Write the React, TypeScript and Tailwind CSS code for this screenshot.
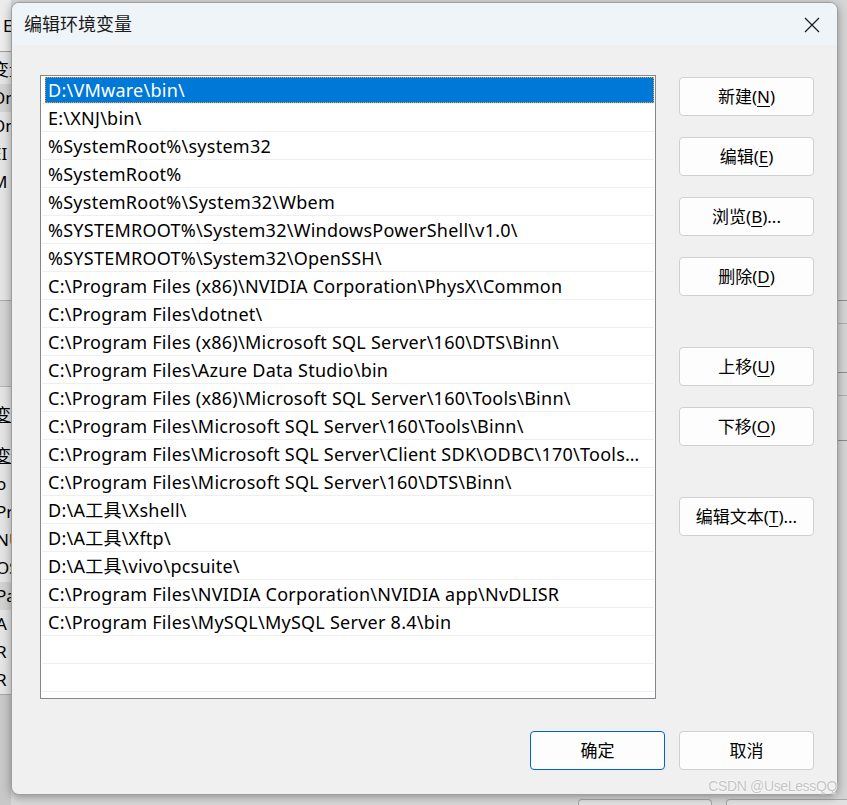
import React from 'react';

const FONT = '"Noto Sans", "Noto Sans CJK SC", sans-serif';

const paths = [
  'D:\\VMware\\bin\\',
  'E:\\XNJ\\bin\\',
  '%SystemRoot%\\system32',
  '%SystemRoot%',
  '%SystemRoot%\\System32\\Wbem',
  '%SYSTEMROOT%\\System32\\WindowsPowerShell\\v1.0\\',
  '%SYSTEMROOT%\\System32\\OpenSSH\\',
  'C:\\Program Files (x86)\\NVIDIA Corporation\\PhysX\\Common',
  'C:\\Program Files\\dotnet\\',
  'C:\\Program Files (x86)\\Microsoft SQL Server\\160\\DTS\\Binn\\',
  'C:\\Program Files\\Azure Data Studio\\bin',
  'C:\\Program Files (x86)\\Microsoft SQL Server\\160\\Tools\\Binn\\',
  'C:\\Program Files\\Microsoft SQL Server\\160\\Tools\\Binn\\',
  'C:\\Program Files\\Microsoft SQL Server\\Client SDK\\ODBC\\170\\Tools\\Binn\\',
  'C:\\Program Files\\Microsoft SQL Server\\160\\DTS\\Binn\\',
  'D:\\A工具\\Xshell\\',
  'D:\\A工具\\Xftp\\',
  'D:\\A工具\\vivo\\pcsuite\\',
  'C:\\Program Files\\NVIDIA Corporation\\NVIDIA app\\NvDLISR',
  'C:\\Program Files\\MySQL\\MySQL Server 8.4\\bin',
  '',
  '',
];

// left edge of the settings window lying behind the dialog
const behindTop = ['变量', 'On', 'On', 'EI', 'M'];
const behindLower = ['o', 'Pri', 'NU', 'OS', 'Pat', 'A', 'R', 'R'];

interface DlgButtonProps {
  label: string;
  hotkey?: string;
  tail?: string;
  primary?: boolean;
  className?: string;
}

function DlgButton({ label, hotkey, tail = '', primary, className = '' }: DlgButtonProps) {
  return (
    <button
      className={`w-[135px] h-[39px] rounded-[4px] bg-[#fdfdfd] text-[17px] text-black flex items-center justify-center ${
        primary ? 'border border-[#0067c0]' : 'border border-[#d0d0d0]'
      } ${className}`}
    >
      {label}
      {hotkey && (
        <>
          (<span className="underline underline-offset-[3px]">{hotkey}</span>)
        </>
      )}
      {tail}
    </button>
  );
}

export default function App() {
  return (
    <div
      className="relative w-[847px] h-[805px] overflow-hidden bg-[#d8d8d8]"
      style={{ fontFamily: FONT }}
    >
      {/* background window strip */}
      <div className="w-[11px] h-full flex flex-col overflow-hidden text-[17px] text-black whitespace-nowrap">
        <div className="h-[51px] bg-[#ececec] flex items-center pl-[3px] leading-none">E</div>
        <div className="h-px bg-[#9c9c9c]" />
        <div className="bg-[#e4e4e4] flex flex-col pt-[4px]">
          {behindTop.map((t, i) => (
            <div
              key={i}
              className={`h-[28px] flex items-center -ml-[8px] ${i === 1 ? 'bg-[#d2d2d2]' : ''}`}
            >
              {t}
            </div>
          ))}
        </div>
        <div className="h-[104px] bg-[#e4e4e4]" />
        <div className="h-px bg-[#a8a8a8]" />
        <div className="h-[85px] bg-[#d4d4d4]" />
        <div className="h-px bg-[#b4b4b4]" />
        <div className="h-[55px] bg-[#e4e4e4] flex items-center -ml-[6px] underline">变</div>
        <div className="bg-[#e4e4e4] flex flex-col">
          <div className="h-[28px] flex items-center -ml-[6px] underline">变量</div>
          {behindLower.map((t, i) => (
            <div
              key={i}
              className={`h-[28px] flex items-center -ml-[4px] ${i === 4 ? 'bg-[#d2d2d2]' : ''}`}
            >
              {t}
            </div>
          ))}
        </div>
        <div className="h-px bg-[#a8a8a8]" />
        <div className="flex-1 bg-[#c8c8c8]" />
      </div>

      {/* right edge of the window behind */}
      <div className="absolute right-0 top-0 w-[9px] h-full bg-[#d6d6d6] flex flex-col">
        <div className="h-[300px]" />
        <div className="h-px bg-[#8e8e8e]" />
        <div className="h-[22px]" />
        <div className="h-px bg-[#b0b0b0]" />
        <div className="h-[48px]" />
        <div className="h-px bg-[#8e8e8e]" />
        <div className="h-[22px]" />
        <div className="h-px bg-[#b0b0b0]" />
        <div className="h-[44px]" />
        <div className="h-px bg-[#8a8a8a]" />
      </div>

      {/* bottom buttons of the window behind */}
      <div className="absolute left-[578px] bottom-0 flex gap-[14px]">
        <div className="w-[134px] h-[6px] rounded-t-[4px] border border-b-0 border-[#a8a8a8] bg-[#e2e2e2]" />
        <div className="w-[134px] h-[6px] rounded-t-[4px] border border-b-0 border-[#a8a8a8] bg-[#e2e2e2]" />
      </div>

      {/* dialog window */}
      <div className="absolute left-[11px] top-[2px] w-[827px] h-[793px] rounded-[8px] border border-[#9e9e9e] bg-[#f0f0f0] shadow-[0_2px_10px_rgba(0,0,0,0.35)] overflow-hidden flex flex-col">
        <div className="h-[42px] bg-[#eff4f9] flex items-center justify-between pl-[12px] pr-[17px]">
          <span className="text-[18px] text-[#1a1a1a]">编辑环境变量</span>
          <svg width="16" height="16" viewBox="0 0 16 16" className="mt-[1px]">
            <path d="M1 1 L15 15 M15 1 L1 15" stroke="#1a1a1a" strokeWidth="1.2" />
          </svg>
        </div>

        <div className="flex-1 flex flex-col pt-[30px] pl-[28px] pr-[23px]">
          <div className="flex gap-[23px]">
            {/* path list */}
            <div className="w-[616px] h-[624px] border border-[#828790] bg-white flex flex-col overflow-hidden">
              {paths.map((p, i) => (
                <div key={i} className="h-[28px] shrink-0 flex flex-col">
                  <div className="h-[27px] flex items-center">
                    {i === 0 ? (
                      <div className="ml-[4px] mr-[1px] h-[26px] flex-1 bg-[#0078d7] border border-dotted border-[#f0a030] flex items-center pl-[2px] pt-[2px] text-white text-[18px] tracking-[0.25px] whitespace-nowrap">
                        {p}
                      </div>
                    ) : (
                      <div className="pl-[7px] pr-[11px] pt-[2px] text-[18px] tracking-[0.25px] text-black whitespace-nowrap overflow-hidden text-ellipsis">
                        {p}
                      </div>
                    )}
                  </div>
                  <div className="mx-[1px] h-px bg-[#efefef]" />
                </div>
              ))}
            </div>

            {/* side buttons */}
            <div className="flex flex-col mt-[2px]">
              <DlgButton label="新建" hotkey="N" />
              <DlgButton label="编辑" hotkey="E" className="mt-[21px]" />
              <DlgButton label="浏览" hotkey="B" tail="..." className="mt-[21px]" />
              <DlgButton label="删除" hotkey="D" className="mt-[21px]" />
              <DlgButton label="上移" hotkey="U" className="mt-[51px]" />
              <DlgButton label="下移" hotkey="O" className="mt-[21px]" />
              <DlgButton label="编辑文本" hotkey="T" tail="..." className="mt-[51px]" />
            </div>
          </div>

          <div className="flex justify-end gap-[14px] mt-[32px]">
            <DlgButton label="确定" primary />
            <DlgButton label="取消" />
          </div>
        </div>
      </div>

      {/* watermark */}
      <div
        className="absolute right-[10px] bottom-[8px] text-[14px] text-[#c4c4c4] tracking-tight"
        style={{ fontFamily: '"Liberation Sans", sans-serif', textShadow: '0 0 2px #fff, 0 0 1px #fff' }}
      >
        CSDN @UseLessQQ
      </div>
    </div>
  );
}
